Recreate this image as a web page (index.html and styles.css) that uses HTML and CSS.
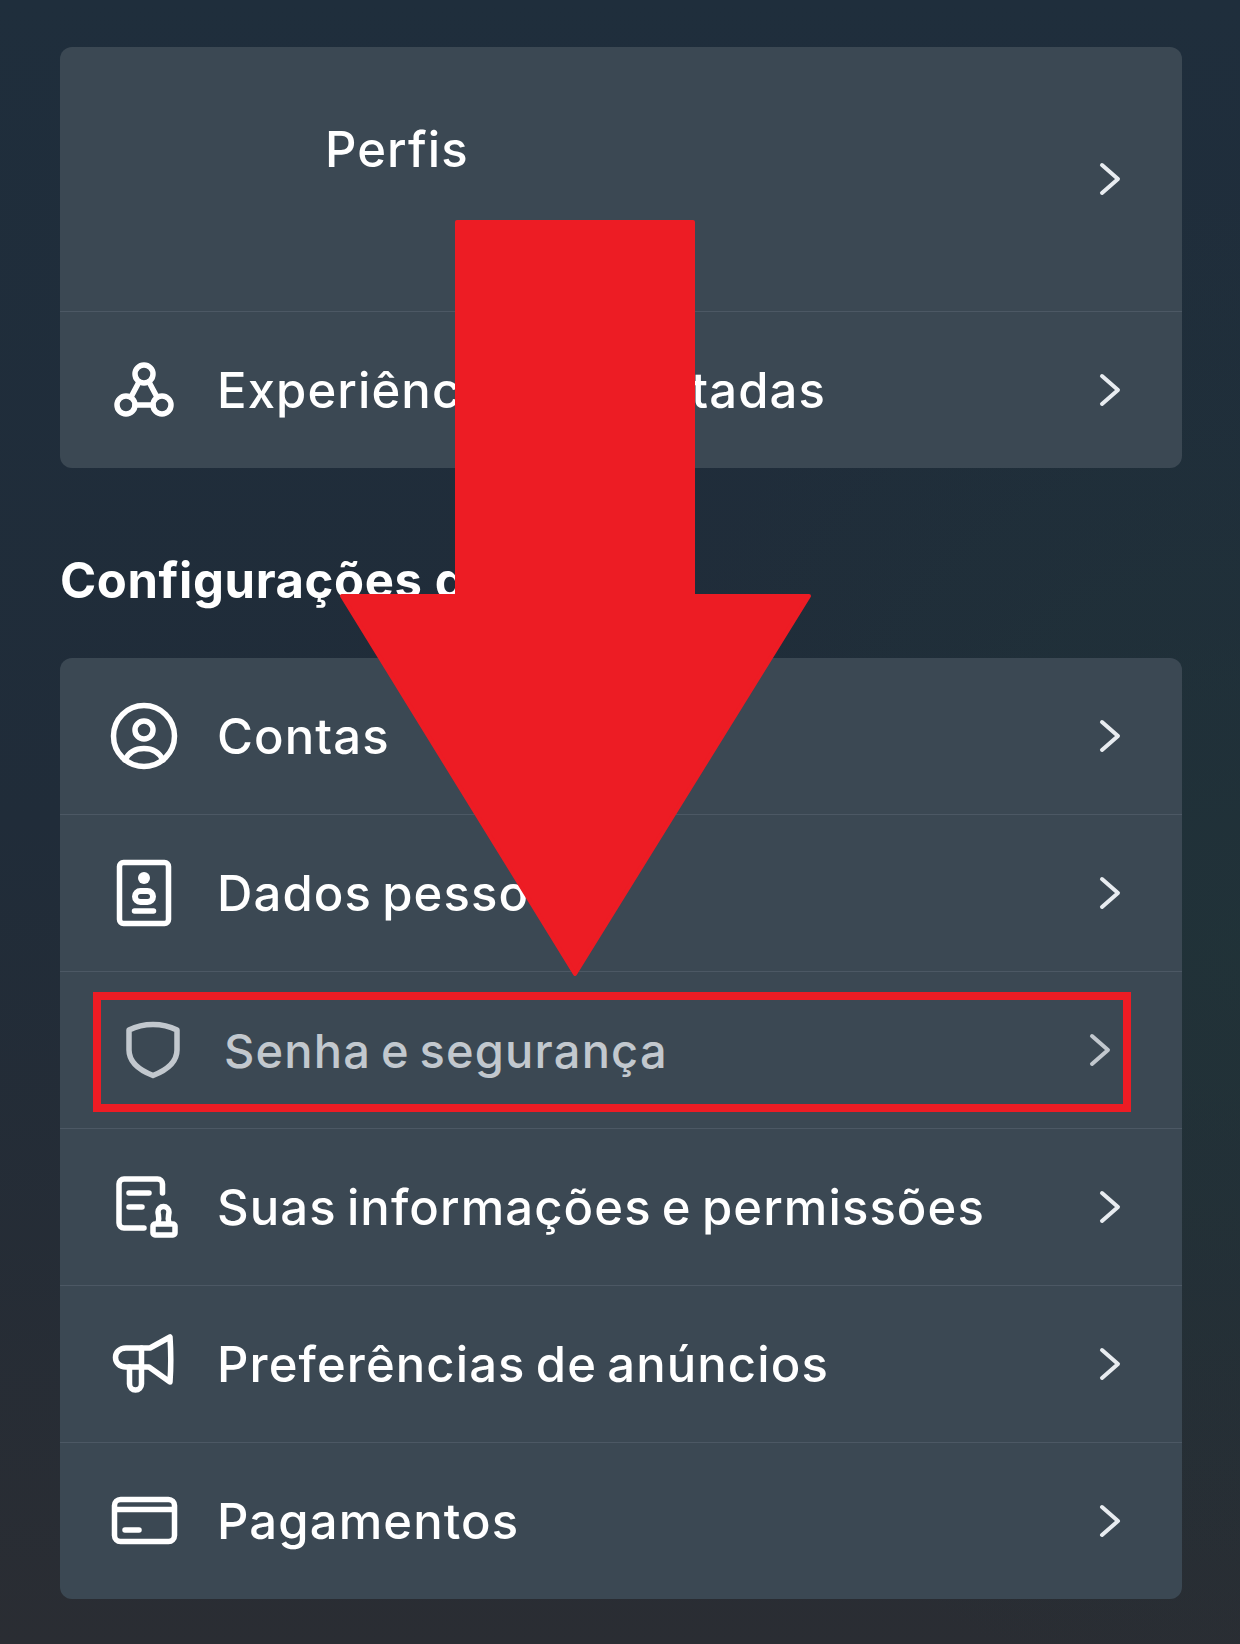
FILE: index.html
```html
<!DOCTYPE html>
<html lang="pt-BR">
<head>
  <meta charset="UTF-8">
  <meta name="viewport" content="width=device-width, initial-scale=1">
  <title>Central de Contas</title>
  <link rel="stylesheet" href="styles.css">
</head>
<body>
  <div class="page">
    <div class="card">
      <div class="row row-tall">
        <span class="label label-top">Perfis</span>
        <svg class="chevron" viewBox="0 0 24 36"><path d="M4 4l16 14L4 32"/></svg>
      </div>
      <div class="row">
        <svg class="icon" viewBox="0 0 72 72">
          <circle cx="36" cy="20" r="9"/><circle cx="18" cy="51" r="9"/><circle cx="54" cy="51" r="9"/>
          <path d="M31 28L23 43M41 28L49 43M27 51H45"/>
        </svg>
        <span class="label">Experiências conectadas</span>
        <svg class="chevron" viewBox="0 0 24 36"><path d="M4 4l16 14L4 32"/></svg>
      </div>
    </div>

    <h2 class="section-title">Configurações da conta</h2>

    <div class="card">
      <div class="row">
        <svg class="icon" viewBox="0 0 72 72">
          <circle cx="36" cy="36" r="30.5"/><circle cx="36" cy="30" r="9"/>
          <path d="M17 60C21 52 28 48.5 36 48.5S51 52 55 60"/>
        </svg>
        <span class="label">Contas</span>
        <svg class="chevron" viewBox="0 0 24 36"><path d="M4 4l16 14L4 32"/></svg>
      </div>
      <div class="row">
        <svg class="icon" viewBox="0 0 72 72">
          <rect x="11.5" y="5.5" width="49" height="61" rx="4"/>
          <circle class="solid" cx="36" cy="21" r="6"/>
          <rect class="thick" x="27" y="34" width="18" height="11" rx="5.5"/>
          <path d="M26.5 54H45.5"/>
        </svg>
        <span class="label">Dados pessoais</span>
        <svg class="chevron" viewBox="0 0 24 36"><path d="M4 4l16 14L4 32"/></svg>
      </div>
      <div class="row row-pressed">
        <svg class="icon" viewBox="0 0 72 72">
          <path d="M36 10.5C45 10.5 53 12.5 60 16V36C60 48 50 56 36 61.5C22 56 12 48 12 36V16C19 12.5 27 10.5 36 10.5Z"/>
        </svg>
        <span class="label">Senha e segurança</span>
        <svg class="chevron" viewBox="0 0 24 36"><path d="M4 4l16 14L4 32"/></svg>
      </div>
      <div class="row">
        <svg class="icon" viewBox="0 0 72 72">
          <path d="M54.5 22V13a5 5 0 0 0-5-5H16a5 5 0 0 0-5 5V52a5 5 0 0 0 5 5H36"/>
          <path d="M21 22H41M21 36H34"/>
          <path d="M50 52C52 47 50 44 50 41a5.5 5.5 0 0 1 11 0C61 44 59 47 61 52"/>
          <rect x="45" y="53" width="22" height="11" rx="2"/>
        </svg>
        <span class="label">Suas informações e permissões</span>
        <svg class="chevron" viewBox="0 0 24 36"><path d="M4 4l16 14L4 32"/></svg>
      </div>
      <div class="row">
        <svg class="icon" viewBox="0 0 72 72">
          <path d="M62 9C63 24 63 40 62 54L41 39H18C4 39 4 20 18 20H42Z"/>
          <path d="M21.5 39V56a6 6 0 0 0 12 0V20"/>
        </svg>
        <span class="label">Preferências de anúncios</span>
        <svg class="chevron" viewBox="0 0 24 36"><path d="M4 4l16 14L4 32"/></svg>
      </div>
      <div class="row">
        <svg class="icon" viewBox="0 0 72 72">
          <rect x="6.5" y="14.5" width="60" height="42" rx="6"/>
          <path d="M7 24.5H66M17 45H31"/>
        </svg>
        <span class="label">Pagamentos</span>
        <svg class="chevron" viewBox="0 0 24 36"><path d="M4 4l16 14L4 32"/></svg>
      </div>
    </div>

    <!-- red markup on top of the screenshot -->
    <div class="highlight"></div>
    <svg class="arrow" viewBox="0 0 474 758">
      <path d="M118 2H354V376H470L236 754L3 376H118Z"/>
    </svg>
  </div>
</body>
</html>
```

FILE: styles.css
```css
* {
  box-sizing: border-box;
}
body {
  margin: 0;
  font-family: "Inter", "Liberation Sans", sans-serif;
  color: #fff;
}
.page {
  position: relative;
  height: 1644px;
  overflow: hidden;
  padding: 47px 58px 0 60px;
  background:
    radial-gradient(620px 760px at 100% 58%, rgba(32,54,56,.6), rgba(32,54,56,0)),
    linear-gradient(180deg, #1f2e3c 0%, #202c39 50%, #2a2d33 100%);
}
.card {
  background: #3b4853;
  border-radius: 12px;
  overflow: hidden;
}
.row {
  display: flex;
  align-items: center;
  height: 157px;
  padding: 0 60px 0 48px;
  border-bottom: 1px solid #4c5864;
}
.row:last-child {
  height: 156px;
  border-bottom: 0;
}
.row-tall {
  height: 265px;
}
.row-pressed {
  padding: 0 70px 0 57px;
  color: #c2c8ce;
}
.icon {
  width: 72px;
  height: 72px;
  flex: none;
  margin-right: 37px;
  fill: none;
  stroke: currentColor;
  stroke-width: 5.5;
  stroke-linecap: round;
  stroke-linejoin: round;
}
.icon .solid {
  fill: currentColor;
  stroke: none;
}
.icon .thick {
  stroke-width: 6;
}
.row-pressed .icon {
  margin-right: 35px;
}
.label {
  flex: 1;
  font-size: 49px;
  font-weight: 450;
  letter-spacing: 1.1px;
  word-spacing: -4px;
  white-space: nowrap;
}
.row-pressed .label {
  font-size: 47px;
  letter-spacing: 1.2px;
}
.label-top {
  margin-left: 217px;
  margin-bottom: 60px;
}
.chevron {
  width: 24px;
  height: 36px;
  flex: none;
  fill: none;
  stroke: #e8ecf0;
  stroke-width: 4;
  stroke-linecap: round;
  stroke-linejoin: round;
}
.row-pressed .chevron {
  stroke: #c2c8ce;
}
.section-title {
  height: 190px;
  margin: 0;
  padding-top: 83px;
  font-size: 49px;
  font-weight: 700;
  letter-spacing: 0.6px;
  line-height: 60px;
}
.highlight {
  position: absolute;
  left: 93px;
  top: 992px;
  width: 1038px;
  height: 120px;
  border: 8px solid #ed1c24;
}
.arrow {
  position: absolute;
  left: 339px;
  top: 220px;
  width: 474px;
  height: 758px;
  fill: #ed1c24;
  stroke: #ed1c24;
  stroke-width: 4;
  stroke-linejoin: round;
}
```
